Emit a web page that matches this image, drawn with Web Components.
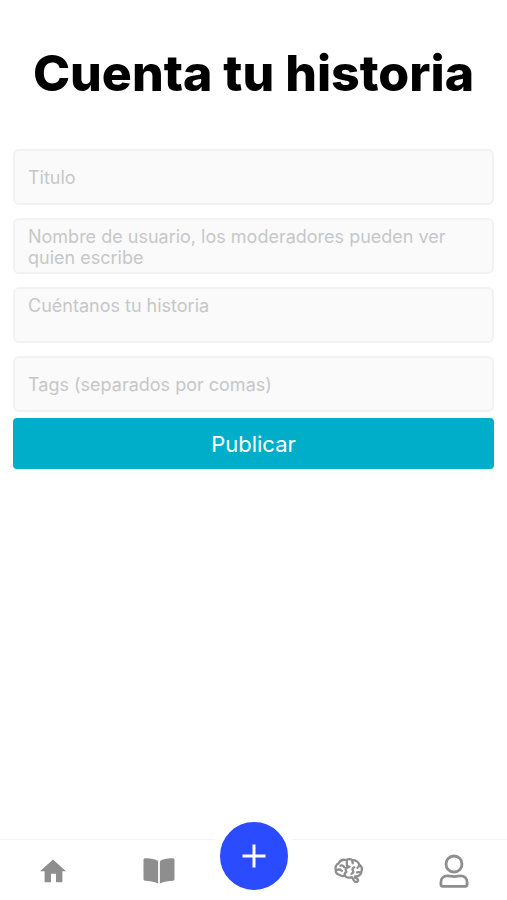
<!DOCTYPE html>
<html lang="es">
<head>
<meta charset="UTF-8">
<meta name="viewport" content="width=device-width, initial-scale=1">
<title>Cuenta tu historia</title>
<style>
  body {
    margin: 0;
    background: #fff;
    font-family: Inter, Roboto, sans-serif;
  }
</style>
</head>
<body>
<story-app>
  <page-title slot="title">Cuenta tu historia</page-title>
  <story-form>
    <text-field label="Titulo"></text-field>
    <text-field label="Nombre de usuario, los moderadores pueden ver quien escribe" multiline></text-field>
    <text-field label="Cuéntanos tu historia" multiline></text-field>
    <text-field label="Tags (separados por comas)"></text-field>
    <submit-button slot="action">Publicar</submit-button>
  </story-form>
  <tab-bar slot="nav"></tab-bar>
</story-app>

<script>
class StoryApp extends HTMLElement {
  constructor() {
    super();
    const shadow = this.attachShadow({ mode: 'open' });
    shadow.innerHTML = `
      <style>
        :host {
          display: flex;
          flex-direction: column;
          min-height: 100vh;
        }
        main {
          flex: 1;
          padding: 40px 13px 24px;
        }
      </style>
      <main>
        <slot name="title"></slot>
        <slot></slot>
      </main>
      <slot name="nav"></slot>
    `;
  }
}

class PageTitle extends HTMLElement {
  constructor() {
    super();
    const shadow = this.attachShadow({ mode: 'open' });
    shadow.innerHTML = `
      <style>
        :host {
          display: block;
          margin-bottom: 43px;
        }
        h1 {
          margin: 0;
          font-size: 50px;
          line-height: 66px;
          font-weight: 800;
          text-align: center;
          color: #000;
        }
      </style>
      <h1><slot></slot></h1>
    `;
  }
}

class StoryForm extends HTMLElement {
  constructor() {
    super();
    const shadow = this.attachShadow({ mode: 'open' });
    shadow.innerHTML = `
      <style>
        :host { display: block; }
        form {
          display: flex;
          flex-direction: column;
          gap: 6px;
        }
        .fields {
          display: flex;
          flex-direction: column;
          gap: 13px;
        }
      </style>
      <form>
        <div class="fields"><slot></slot></div>
        <slot name="action"></slot>
      </form>
    `;
  }
}

class TextField extends HTMLElement {
  constructor() {
    super();
    this.attachShadow({ mode: 'open' });
  }

  connectedCallback() {
    const label = this.getAttribute('label');
    const control = this.hasAttribute('multiline')
      ? `<textarea aria-label="${label}" placeholder="${label}"></textarea>`
      : `<input type="text" aria-label="${label}" placeholder="${label}">`;

    this.shadowRoot.innerHTML = `
      <style>
        :host { display: block; }
        input, textarea {
          display: block;
          box-sizing: border-box;
          width: 100%;
          height: 56px;
          margin: 0;
          padding: 0 13px;
          border: 2px solid #f2f2f2;
          border-radius: 6px;
          background: #fafafa;
          color: #222;
          font-family: inherit;
          font-size: 18px;
          line-height: 21px;
          outline: none;
          resize: none;
          overflow: hidden;
        }
        textarea { padding-top: 6px; }
        ::placeholder {
          color: #c7c7c9;
          opacity: 1;
        }
      </style>
      ${control}
    `;
  }
}

class SubmitButton extends HTMLElement {
  constructor() {
    super();
    const shadow = this.attachShadow({ mode: 'open' });
    shadow.innerHTML = `
      <style>
        :host { display: block; }
        button {
          display: block;
          width: 100%;
          height: 51px;
          padding: 0;
          border: 0;
          border-radius: 4px;
          background: #00aeca;
          color: #fff;
          font-family: inherit;
          font-size: 22px;
          line-height: 28px;
          cursor: pointer;
        }
      </style>
      <button type="button"><slot></slot></button>
    `;
  }
}

class TabBar extends HTMLElement {
  constructor() {
    super();
    const shadow = this.attachShadow({ mode: 'open' });
    shadow.innerHTML = `
      <style>
        :host { display: block; }
        nav {
          display: flex;
          height: 60px;
          border-top: 1px solid #f4f4f4;
          background: #fff;
        }
        a {
          flex: 1;
          display: flex;
          align-items: center;
          justify-content: center;
          padding-top: 2px;
          color: #8e8e8e;
        }
        svg { display: block; }
        .add {
          width: 68px;
          height: 68px;
          box-sizing: content-box;
          margin-top: -26px;
          padding: 0;
          border: 8px solid #fff;
          border-radius: 50%;
          background: #2a4bff;
          display: flex;
          align-items: center;
          justify-content: center;
          flex: none;
          color: #fff;
          cursor: pointer;
        }
      </style>
      <nav>
        <a href="#inicio" aria-label="Inicio">
          <svg width="32" height="32" viewBox="0 0 32 32" fill="currentColor">
            <path d="M16 4.500 29 16.300h-3.600v11h-6.400v-8.500h-5v8.500H7.600v-11H3z"/>
          </svg>
        </a>
        <a href="#historias" aria-label="Historias">
          <svg width="32" height="32" viewBox="0 0 32 32" fill="currentColor">
            <path d="M15.100 6.100C11.600 3.700 6.700 2.900 2 3.200Q.5 3.300.5 4.700V24.300Q.5 25.700 2 25.800C6.900 26.100 10.800 26.300 15.100 28.600z"/>
            <path d="M16.900 6.100C20.400 3.700 25.300 2.900 30 3.200Q31.500 3.300 31.500 4.700V24.300Q31.500 25.700 30 25.800C25.100 26.100 21.200 26.300 16.900 28.600z"/>
          </svg>
        </a>
        <button class="add" type="button" aria-label="Crear">
          <svg width="32" height="32" viewBox="0 0 32 32" fill="none" stroke="currentColor" stroke-width="3">
            <path d="M16 4.500v23M4.500 16h23"/>
          </svg>
        </button>
        <a href="#mente" aria-label="Mente">
          <svg width="32" height="32" viewBox="0 0 32 32" fill="none" stroke="currentColor" stroke-width="2.300" stroke-linecap="round" stroke-linejoin="round">
            <path d="M23 21.500c3.500.2 6.300-1.600 6.400-4.800 1-2.800.1-5.700-2.200-7C26.300 6.700 23.300 5 20.500 5.200c-1.900-1.300-4.400-1.300-6.200-.2C10.800 4.200 8 5.500 6.800 8.100 4.200 9.300 3 12.300 3.800 15c-.4 2.600 1.300 4.600 3.700 4.900 1.600 1.300 3.600 1.400 5.200.7 1.300 1.800 3.500 2.300 5.300 1.900h2.300l1.700 3.200c.6 1.700 3.400 1.700 4 .1.300-1.500-.7-2.500-3-3.200"/>
            <path d="M8.500 10.600c1.700-.5 3.100.1 3.600 1.600M4.200 15.200c2.200-1 4.300-.8 5.600.6M12.700 20.200c-.3-1.600.4-2.800 1.800-3.500M14.800 5.800v3.400c0 1.700 1.200 2.600 2.800 2.600M20.700 5.700c-.5.900-.5 1.700 0 2.500M16.600 12c-2 .4-3 1.600-3 3.100M22.200 12.300c-1.700.4-2.200 1.900-1.300 3.200s.3 2.700-1.300 3.200M27 10c.2 1.300-.4 2.200-1.500 2.800M25 17.300c1.300-.3 2.800-.2 4 .4"/>
          </svg>
        </a>
        <a href="#perfil" aria-label="Perfil">
          <svg width="32" height="36" viewBox="0 0 32 36" fill="none" stroke="currentColor" stroke-width="2.800" stroke-linejoin="round">
            <circle cx="16" cy="11" r="8"/>
            <path d="M9.500 22.800c2.300 0 3.500.8 6.500.8s4.200-.8 6.500-.8c4.100 0 6.600 2.900 6.600 6.500v2.300q0 1.700-1.700 1.700H4.600q-1.700 0-1.700-1.700v-2.300c0-3.600 2.500-6.500 6.600-6.500z"/>
          </svg>
        </a>
      </nav>
    `;
  }
}

customElements.define('story-app', StoryApp);
customElements.define('page-title', PageTitle);
customElements.define('story-form', StoryForm);
customElements.define('text-field', TextField);
customElements.define('submit-button', SubmitButton);
customElements.define('tab-bar', TabBar);
</script>
</body>
</html>
